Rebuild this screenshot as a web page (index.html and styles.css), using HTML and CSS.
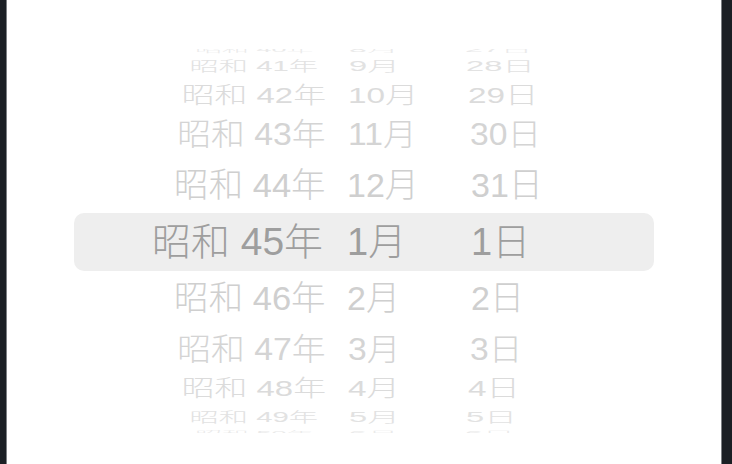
FILE: index.html
```html
<!DOCTYPE html>
<html lang="ja">
<head>
<meta charset="utf-8">
<title>日付ピッカー</title>
<link rel="stylesheet" href="styles.css">
</head>
<body>
<div class="panel">
  <div class="clip">
    <div class="wheel">
      <div class="row k5"><span class="yr">昭和 40年</span><span class="mo">8月</span><span class="dy">27日</span></div>
      <div class="row k4"><span class="yr">昭和 41年</span><span class="mo">9月</span><span class="dy">28日</span></div>
      <div class="row k3"><span class="yr">昭和 42年</span><span class="mo">10月</span><span class="dy">29日</span></div>
      <div class="row k2"><span class="yr">昭和 43年</span><span class="mo">11月</span><span class="dy">30日</span></div>
      <div class="row k1"><span class="yr">昭和 44年</span><span class="mo">12月</span><span class="dy">31日</span></div>
      <div class="row sel"><span class="yr">昭和 45年</span><span class="mo">1月</span><span class="dy">1日</span></div>
      <div class="row k1 b"><span class="yr">昭和 46年</span><span class="mo">2月</span><span class="dy">2日</span></div>
      <div class="row k2 b"><span class="yr">昭和 47年</span><span class="mo">3月</span><span class="dy">3日</span></div>
      <div class="row k3 b"><span class="yr">昭和 48年</span><span class="mo">4月</span><span class="dy">4日</span></div>
      <div class="row k4 b"><span class="yr">昭和 49年</span><span class="mo">5月</span><span class="dy">5日</span></div>
      <div class="row k5 b"><span class="yr">昭和 50年</span><span class="mo">6月</span><span class="dy">6日</span></div>
    </div>
  </div>
</div>
</body>
</html>
```
FILE: styles.css
```css
html, body {
  margin: 0;
  height: 464px;
  overflow: hidden;
}
body {
  background: #1b1f24;
  padding: 0 10px 0 6px;
  box-sizing: border-box;
  font-family: "Liberation Sans", "Noto Sans CJK JP", sans-serif;
  font-weight: 300;
}
.panel {
  height: 464px;
  background: #ffffff;
  border-left: 1px solid #7c7f83;
  border-right: 1px solid #7c7f83;
  overflow: hidden;
}
.clip {
  margin-top: 49px;
  height: 384px;
  overflow: hidden;
}
.wheel {
  margin-top: -2.5px;
  display: flex;
  flex-direction: column;
}
.row {
  display: grid;
  grid-template-columns: 150px 100px 1fr;
  column-gap: 24px;
  padding-left: 166px;
  font-size: 34px;
  white-space: nowrap;
  color: var(--c);
  height: var(--h);
  line-height: var(--h);
}
.row span {
  display: block;
}
.row .yr {
  text-align: right;
  transform-origin: 50% 50%;
  transform: translateX(var(--dy)) scale(calc(var(--sx) * 1.015), var(--sy));
}
.row .mo {
  transform-origin: 0 50%;
  transform: translateX(var(--dm)) scale(var(--sc), var(--sy));
}
.row .dy {
  transform-origin: 0 50%;
  transform: translateX(var(--dd)) scale(var(--sc), var(--sy));
}
.k1 { --h: 55px; --sx: 1; --sc: 1; --sy: 1; --dy: 1.5px; --dm: 0px; --dd: 0px; --c: #cfcfcf; }
.k2 { --h: 47px; --sx: 0.98; --sc: 0.99; --sy: 0.9; --dy: 3px; --dm: 1px; --dd: -1px; --c: #d4d4d4; }
.k3 { --h: 31px; --sx: 0.953; --sc: 0.98; --sy: 0.655; --dy: 5.5px; --dm: 1px; --dd: -3px; --c: #dbdbdb; }
.k4 { --h: 27px; --sx: 0.85; --sc: 0.96; --sy: 0.41; --dy: 5.5px; --dm: 2px; --dd: -5px; --c: #e2e2e2; }
.k5 { --h: 6px; --sx: 0.78; --sc: 0.94; --sy: 0.2; --dy: 6px; --dm: 2px; --dd: -6px; --c: #eaeaea; }
.row.sel {
  height: 58px;
  line-height: 58px;
  margin: 0 67px;
  padding-left: 77px;
  border-radius: 10px;
  background: #eeeeee;
  grid-template-columns: 170px 98px 1fr;
  column-gap: 26px;
  font-size: 38px;
  color: #9e9e9e;
}
.row.sel span {
  transform: none;
}
.row.sel .yr {
  transform-origin: 100% 50%;
  transform: translateX(2px) scaleX(1.025);
}
```
